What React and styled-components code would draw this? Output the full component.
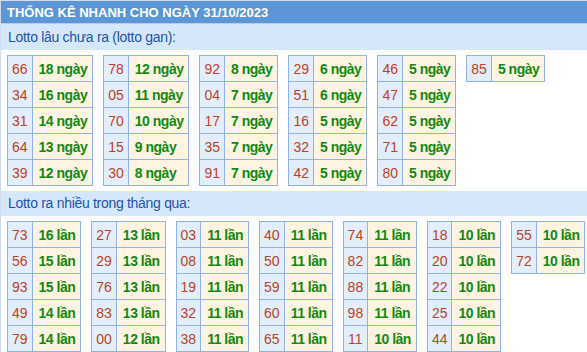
import styled, { createGlobalStyle } from 'styled-components';

const GlobalStyle = createGlobalStyle`
  body {
    margin: 0;
    background: #fff;
    font-family: "Liberation Sans", Arial, sans-serif;
    overflow: hidden;
  }
`

const Box = styled.div`
  border-left: 1px solid #cfdbea;
  border-top: 1px solid #d5dde8;
  background: #fff;
`

const Title = styled.div`
  height: 22px;
  line-height: 23px;
  padding-left: 6px;
  background: #5b97d7;
  border-bottom: 1px solid #c4cbd5;
  color: #fff;
  font-weight: bold;
  font-size: 13px;
`

const SubTitle = styled.div`
  height: ${({short}) => short ? "25px" : "26px"};
  line-height: ${({short}) => short ? "25px" : "26px"};
  padding-left: 7px;
  background: #d5e8fb;
  color: #1d52b0;
  font-size: 14px;
  letter-spacing: -0.3px;
`

const Tables = styled.div`
  display: flex;
  align-items: flex-start;
  gap: 10px;
  padding: 5px 0 5px 6px;
`

const Table = styled.table`
  flex-shrink: 0;
  border-collapse: collapse;
  border: 1px solid #8fb2ee;
  font-size: 14px;

  td {
    border: 1px solid #8fb2ee;
    height: 26px;
    padding: 0;
    line-height: 16px;
    box-sizing: border-box;
    white-space: nowrap;
  }
`

const Num = styled.td`
  && {
    padding: 0 4px;
  }
  background: #e3eefc;
  color: #bb4227;
  text-align: center;
`

const Val = styled.td`
  && {
    padding: 0 5px 0 6px;
  }
  background: #fff4e2;
  color: #118a11;
  font-weight: bold;
  letter-spacing: -0.5px;
`

const gan = [
  [["66", 18], ["34", 16], ["31", 14], ["64", 13], ["39", 12]],
  [["78", 12], ["05", 11], ["70", 10], ["15", 9], ["30", 8]],
  [["92", 8], ["04", 7], ["17", 7], ["35", 7], ["91", 7]],
  [["29", 6], ["51", 6], ["16", 5], ["32", 5], ["42", 5]],
  [["46", 5], ["47", 5], ["62", 5], ["71", 5], ["80", 5]],
  [["85", 5]],
]

const nhieu = [
  [["73", 16], ["56", 15], ["93", 15], ["49", 14], ["79", 14]],
  [["27", 13], ["29", 13], ["76", 13], ["83", 13], ["00", 12]],
  [["03", 11], ["08", 11], ["19", 11], ["32", 11], ["38", 11]],
  [["40", 11], ["50", 11], ["59", 11], ["60", 11], ["65", 11]],
  [["74", 11], ["82", 11], ["88", 11], ["98", 11], ["11", 10]],
  [["18", 10], ["20", 10], ["22", 10], ["25", 10], ["44", 10]],
  [["55", 10], ["72", 10]],
]

const Group = ({data, unit}) => (
  <Tables>
    {data.map((col, i) => (
      <Table key={i}>
        <tbody>
          {col.map(([n, c]) => (
            <tr key={n}>
              <Num>{n}</Num>
              <Val>{c} {unit}</Val>
            </tr>
          ))}
        </tbody>
      </Table>
    ))}
  </Tables>
)

const App = () => {
  return (
    <>
      <GlobalStyle />
      <Box>
        <Title>THỐNG KÊ NHANH CHO NGÀY 31/10/2023</Title>
        <SubTitle>Lotto lâu chưa ra (lotto gan):</SubTitle>
        <Group data={gan} unit="ngày" />
        <SubTitle short>Lotto ra nhiều trong tháng qua:</SubTitle>
        <Group data={nhieu} unit="lần" />
      </Box>
    </>
  )
}

export default App
